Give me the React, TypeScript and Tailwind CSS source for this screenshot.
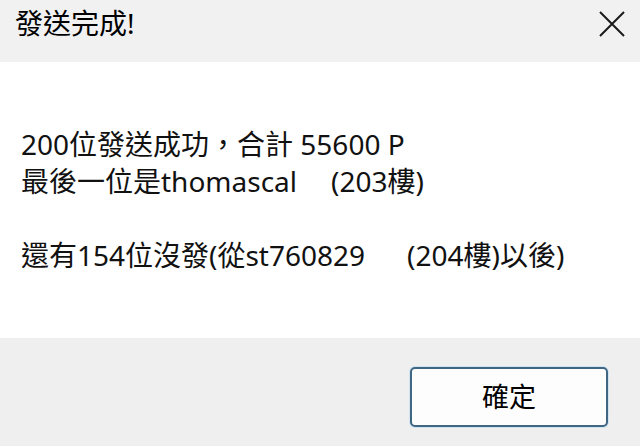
import React from 'react';

export default function App() {
  return (
    <div
      className="w-[640px] h-[446px] flex flex-col bg-white text-black"
      style={{ fontFamily: '"Noto Sans", "Noto Sans CJK TC", sans-serif' }}
    >
      <div className="h-[62px] bg-[#f1f1f1] flex items-start justify-between pl-[15px] pr-[14px]">
        <div className="text-[28px] leading-[36px] pt-[5px]">發送完成!</div>
        <svg width="28" height="28" viewBox="0 0 28 28" className="mt-[10px]">
          <path d="M2 2 L26 26 M26 2 L2 26" stroke="#1a1a1a" strokeWidth="2" fill="none" />
        </svg>
      </div>

      <div className="flex-1 bg-white pl-[21px] pt-[64px] text-[28px] leading-[37px] text-[#111]">
        <div>200位發送成功，合計 55600 P</div>
        <div>
          最後一位是thomascal<span className="ml-[34px]">(203樓)</span>
        </div>
        <div className="h-[37px]" />
        <div>
          還有154位沒發(從st760829<span className="ml-[42px]">(204樓)以後)</span>
        </div>
      </div>

      <div className="h-[108px] bg-[#efefef] flex justify-end items-start pt-[29px] pr-[32px]">
        <button className="w-[198px] h-[60px] rounded-[5px] border-2 border-[#3f6784] bg-[#fdfdfd] shadow-[0_0_0_1px_#cfe3f0] text-[27px] text-black">
          確定
        </button>
      </div>
    </div>
  );
}
